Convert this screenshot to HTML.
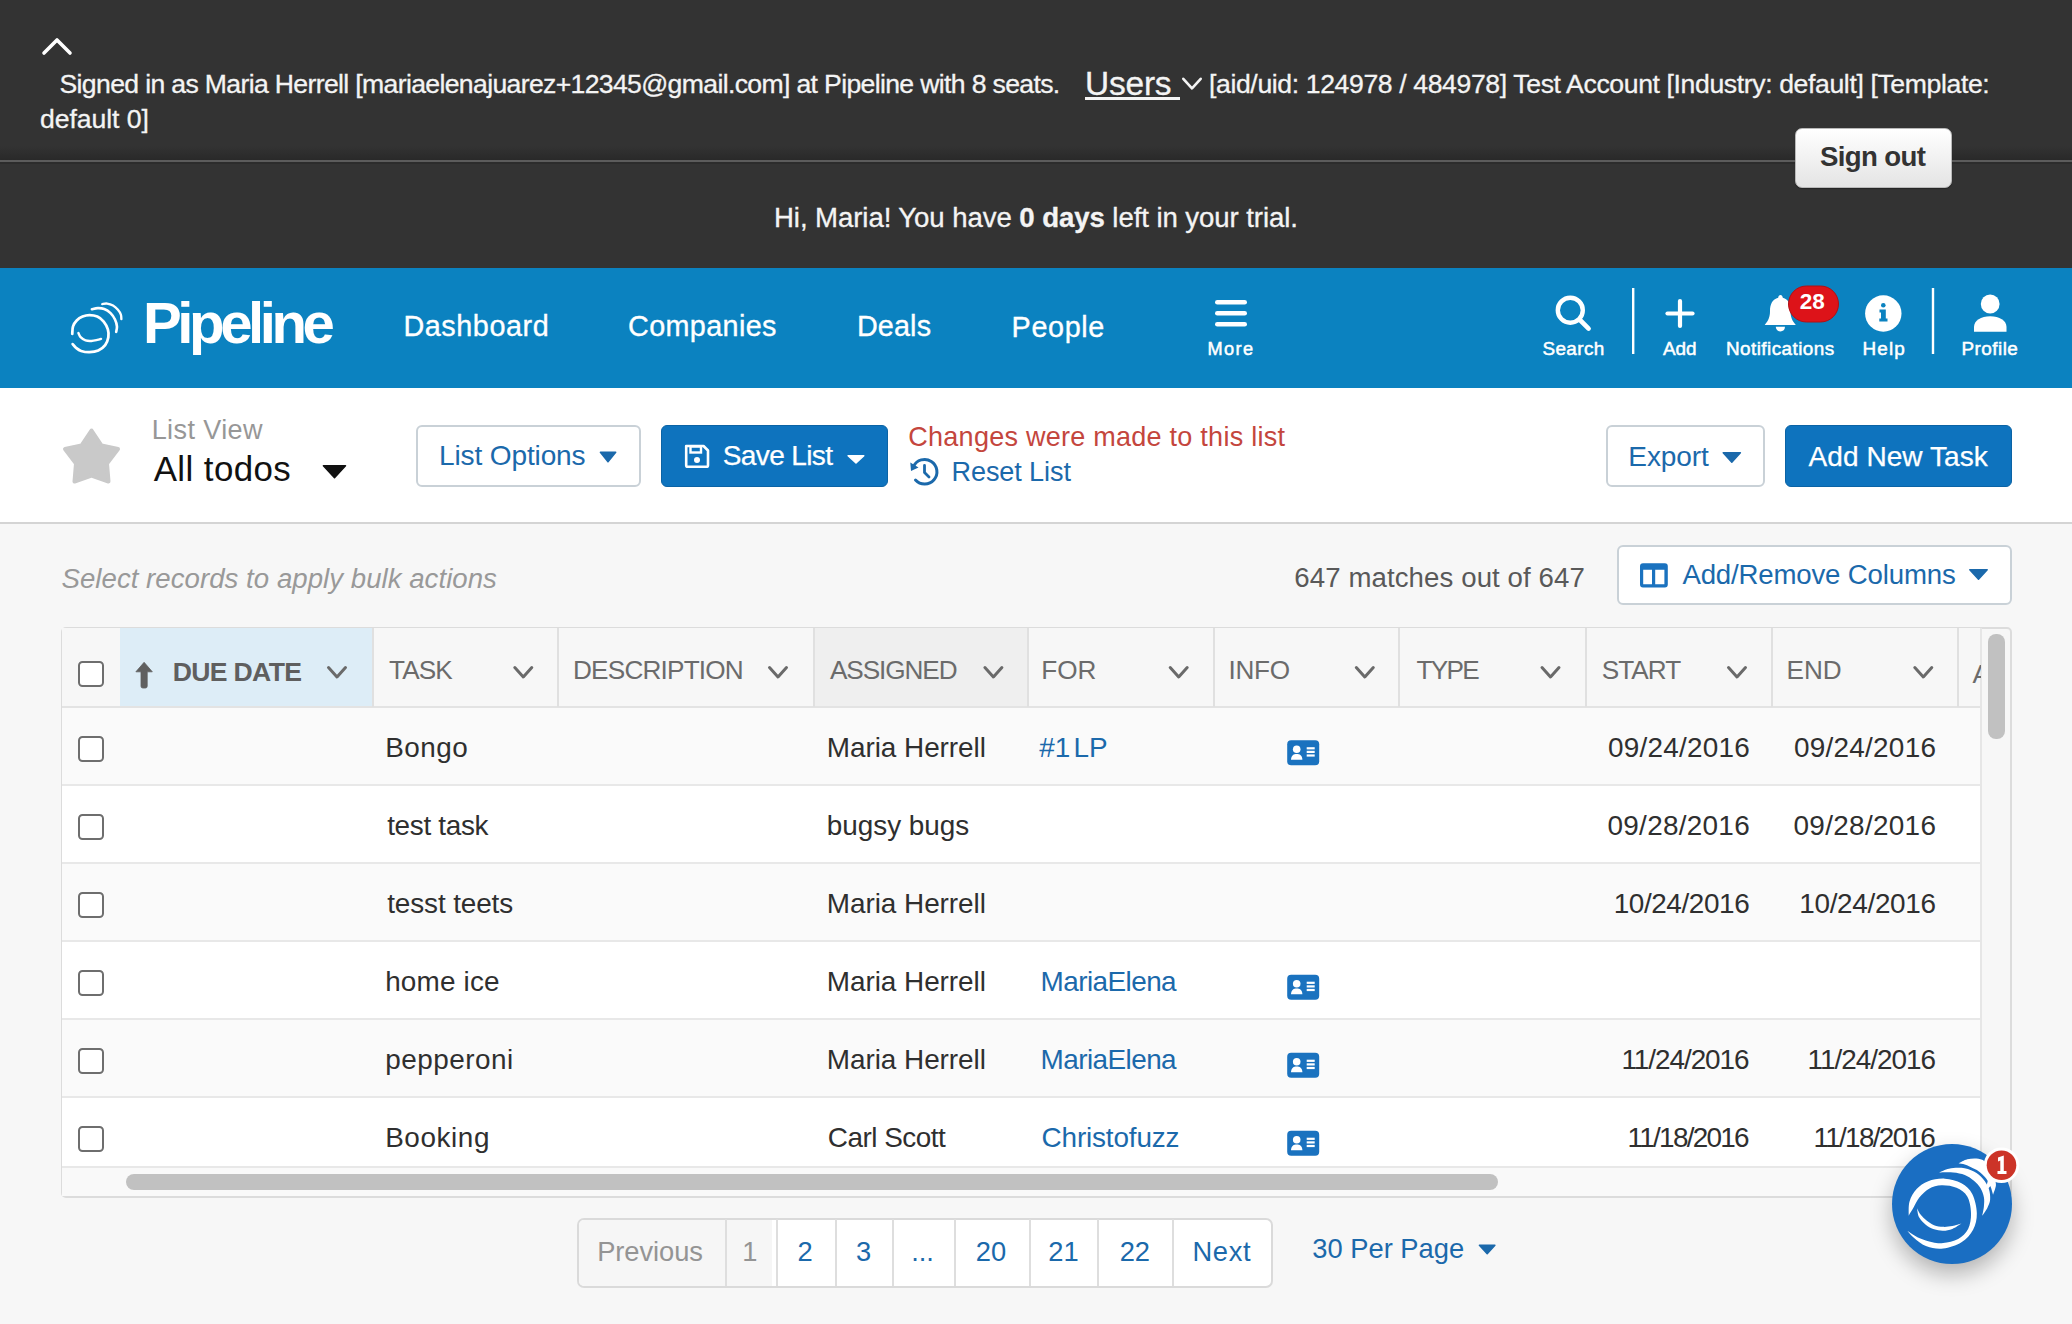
<!DOCTYPE html>
<html><head><meta charset="utf-8"><style>
*{box-sizing:border-box}
html,body{margin:0;padding:0}
body{width:2072px;height:1324px;overflow:hidden;position:relative;background:#f7f7f7;font-family:"Liberation Sans",sans-serif}
.t{position:absolute;white-space:nowrap;font-family:"Liberation Sans",sans-serif}
.abs{position:absolute}
.cb{position:absolute;left:78px;width:26px;height:26px;border:2.2px solid #6e6e6e;border-radius:4.5px;background:#fff}
.row{position:absolute;left:62px;width:1919px;height:78px;border-bottom:2px solid #e8e8e8}
.sep{position:absolute;top:628px;width:2px;height:79px;background:#e0e0e0}
.pd{position:absolute;top:1219px;width:2px;height:67px;background:#dedede}
</style></head><body>
<div class="abs" style="left:0;top:0;width:2072px;height:268px;background:#333333"></div>
<div class="abs" style="left:0;top:146px;width:2072px;height:14px;background:linear-gradient(#333333,#292929)"></div>
<div class="abs" style="left:0;top:160px;width:2072px;height:2px;background:#5c5c5c"></div>
<div class="abs" style="left:0;top:162px;width:2072px;height:1.5px;background:#2c2c2c"></div>
<div class="abs" style="left:1795px;top:128px;width:157px;height:60px;border-radius:7px;background:linear-gradient(#ffffff,#e4e4e4);border:1.5px solid #b9b9b9;box-shadow:0 1px 1px rgba(0,0,0,.3)"></div>
<div class="abs" style="left:0;top:268px;width:2072px;height:120px;background:#0b82c0"></div>
<div class="abs" style="left:0;top:388px;width:2072px;height:134px;background:#ffffff"></div>
<div class="abs" style="left:0;top:521.5px;width:2072px;height:2.5px;background:#d4d4d4"></div>
<div class="abs" style="left:416px;top:425px;width:224.5px;height:61.5px;border:2px solid #c9d1d7;border-radius:6px;background:#fff"></div>
<div class="abs" style="left:661px;top:425px;width:227px;height:61.5px;border-radius:6px;background:#0e73be;border:1px solid #0b63a5"></div>
<div class="abs" style="left:1606px;top:425px;width:158.5px;height:61.5px;border:2px solid #c9d1d7;border-radius:6px;background:#fff"></div>
<div class="abs" style="left:1785px;top:425px;width:227px;height:61.5px;border-radius:6px;background:#0e73be;border:1px solid #0b63a5"></div>
<div class="abs" style="left:1616.5px;top:544.5px;width:395px;height:60.5px;border:2px solid #c9d1d7;border-radius:6px;background:#fff"></div>
<!-- table -->
<div class="abs" style="left:60.5px;top:626.5px;width:1951px;height:571px;border:2px solid #dcdcdc;border-radius:5px;background:#f7f7f7;overflow:hidden">
</div>
<div class="abs" style="left:62px;top:628px;width:1919px;height:80px;background:#f7f7f7;border-bottom:2.5px solid #e3e3e3"></div>
<div class="abs" style="left:120px;top:628px;width:252px;height:77.5px;background:#ddedf7"></div>
<div class="abs" style="left:813.5px;top:628px;width:213.5px;height:77.5px;background:#efefef"></div>
<div class="sep" style="left:371.5px"></div><div class="sep" style="left:557.0px"></div><div class="sep" style="left:812.5px"></div><div class="sep" style="left:1026.5px"></div><div class="sep" style="left:1212.5px"></div><div class="sep" style="left:1398.0px"></div><div class="sep" style="left:1584.5px"></div><div class="sep" style="left:1770.5px"></div><div class="sep" style="left:1956.5px"></div>
<div class="row" style="top:708px;background:#fafafa"></div><div class="row" style="top:786px;background:#ffffff"></div><div class="row" style="top:864px;background:#fafafa"></div><div class="row" style="top:942px;background:#ffffff"></div><div class="row" style="top:1020px;background:#fafafa"></div><div class="row" style="top:1098px;background:#ffffff"></div>
<div class="abs" style="left:62px;top:1166px;width:1919px;height:29.5px;background:#f9f9f9;border-top:2px solid #e8e8e8"></div>
<div class="abs" style="left:126px;top:1173.5px;width:1372px;height:16.5px;border-radius:8px;background:#c1c1c1"></div>
<div class="abs" style="left:1979.8px;top:628px;width:2px;height:568px;background:#e6e6e6"></div>
<div class="abs" style="left:1988px;top:634.4px;width:16.5px;height:105px;border-radius:8px;background:#c1c1c1"></div>
<div class="cb" style="top:661.0px"></div><div class="cb" style="top:735.8px"></div><div class="cb" style="top:813.8px"></div><div class="cb" style="top:891.8px"></div><div class="cb" style="top:969.8px"></div><div class="cb" style="top:1047.8px"></div><div class="cb" style="top:1125.8px"></div>
<div class="abs" style="left:1958px;top:628px;width:22.5px;height:78px;overflow:hidden"><div class="t" style="left:14.5px;top:33px;font-size:26.16px;line-height:26.16px;color:#6b6b6b">A</div></div>
<!-- pagination -->
<div class="abs" style="left:576.5px;top:1218px;width:696px;height:69.5px;border:2px solid #dadada;border-radius:7px;background:#fff;overflow:hidden">
<div class="abs" style="left:0;top:0;width:193px;height:66px;background:#f6f6f6"></div>
</div>
<div class="pd" style="left:724.5px"></div><div class="pd" style="left:775.7px"></div><div class="pd" style="left:834.5px"></div><div class="pd" style="left:891.8px"></div><div class="pd" style="left:953.8px"></div><div class="pd" style="left:1028.8px"></div><div class="pd" style="left:1096.8px"></div><div class="pd" style="left:1171.8px"></div>
<svg class="abs" style="left:0;top:0" width="2072" height="1324" viewBox="0 0 2072 1324">
<polyline points="44,53 57,40 70,53" fill="none" stroke="#fff" stroke-width="3.6" stroke-linecap="round" stroke-linejoin="round"/>
<rect x="1085" y="97" width="95" height="3" fill="#f4f4f4"/>
<polyline points="1183.3,78.8 1192.0,88.4 1200.7,78.8" fill="none" stroke="#f4f4f4" stroke-width="2.6" stroke-linecap="round" stroke-linejoin="round"/>
<g transform="translate(60,295) scale(0.04909)" fill="none" stroke="#fff" stroke-linecap="round"><path d="M250.0 790.0 C252.5 765.0 250.0 685.0 265.0 640.0 C280.0 595.0 307.5 553.3 340.0 520.0 C372.5 486.7 416.7 458.3 460.0 440.0 C503.3 421.7 550.0 410.0 600.0 410.0 C650.0 410.0 711.7 418.3 760.0 440.0 C808.3 461.7 854.2 496.7 890.0 540.0 C925.8 583.3 959.2 646.7 975.0 700.0 C990.8 753.3 994.2 806.7 985.0 860.0 C975.8 913.3 954.2 975.0 920.0 1020.0 C885.8 1065.0 833.3 1105.8 780.0 1130.0 C726.7 1154.2 658.3 1163.3 600.0 1165.0 C541.7 1166.7 475.0 1154.2 430.0 1140.0 C385.0 1125.8 358.7 1103.3 330.0 1080.0 C301.3 1056.7 270.0 1013.3 258.0 1000.0" stroke-width="56"/><path d="M375.0 775.0 C382.5 789.2 395.8 835.0 420.0 860.0 C444.2 885.0 483.3 912.5 520.0 925.0 C556.7 937.5 600.0 936.7 640.0 935.0 C680.0 933.3 727.5 921.7 760.0 915.0 C792.5 908.3 822.5 898.3 835.0 895.0" stroke-width="50"/><path d="M650.0 290.0 C670.0 286.3 728.3 268.8 770.0 268.0 C811.7 267.2 856.7 268.0 900.0 285.0 C943.3 302.0 993.3 334.2 1030.0 370.0 C1066.7 405.8 1098.3 455.0 1120.0 500.0 C1141.7 545.0 1155.8 598.3 1160.0 640.0 C1164.2 681.7 1147.5 731.7 1145.0 750.0" stroke-width="54"/><path d="M860.0 185.0 C876.7 183.3 923.3 170.0 960.0 175.0 C996.7 180.0 1043.3 194.2 1080.0 215.0 C1116.7 235.8 1153.3 269.2 1180.0 300.0 C1206.7 330.8 1228.3 368.3 1240.0 400.0 C1251.7 431.7 1248.3 475.0 1250.0 490.0" stroke-width="48"/></g>
<rect x="1215" y="300" width="32" height="4.6" rx="2.3" fill="#fff"/>
<rect x="1215" y="311" width="32" height="4.6" rx="2.3" fill="#fff"/>
<rect x="1215" y="322" width="32" height="4.6" rx="2.3" fill="#fff"/>
<circle cx="1570.3" cy="310.2" r="12.5" fill="none" stroke="#fff" stroke-width="4.4"/>
<line x1="1579.5" y1="319.5" x2="1588.6" y2="328.6" stroke="#fff" stroke-width="4.6" stroke-linecap="round"/>
<rect x="1632" y="288" width="2.4" height="66" fill="#fff"/>
<rect x="1931.8" y="288" width="2.4" height="66" fill="#fff"/>
<line x1="1667.5" y1="313.5" x2="1692.5" y2="313.5" stroke="#fff" stroke-width="4.2" stroke-linecap="round"/>
<line x1="1680" y1="301" x2="1680" y2="326" stroke="#fff" stroke-width="4.2" stroke-linecap="round"/>
<path d="M1780.5 295 C1782 295 1782.6 296.5 1782.8 297.8 C1788.5 299.5 1790.5 304 1790.5 311 C1790.5 317 1792 320.5 1795.8 324.9 L1764.7 324.9 C1768.5 320.5 1770 317 1770 311 C1770 304 1772.5 299.5 1778.2 297.8 C1778.4 296.5 1779 295 1780.5 295 Z" fill="#fff"/>
<path d="M1775.8 326.7 L1785 326.7 C1785 329.5 1783 331.4 1780.4 331.4 C1777.8 331.4 1775.8 329.5 1775.8 326.7 Z" fill="#fff"/>
<rect x="1788.5" y="286" width="50" height="36" rx="18" fill="#dd1319" stroke="#b01015" stroke-width="1"/>
<circle cx="1883.3" cy="313.5" r="18.2" fill="#fff"/>
<circle cx="1883.3" cy="305.3" r="2.3" fill="#0b82c0"/>
<path d="M1879.5 309.5 L1885.8 309.5 L1885.8 318.5 L1887.5 318.5 L1887.5 321.6 L1879.3 321.6 L1879.3 318.5 L1881 318.5 L1881 312.6 L1879.5 312.6 Z" fill="#0b82c0"/>
<circle cx="1990.2" cy="304" r="9.4" fill="#fff"/>
<path d="M1974 331.7 L1974 327 C1974 320.5 1981 316.3 1990.2 316.3 C1999.4 316.3 2006.5 320.5 2006.5 327 L2006.5 331.7 Z" fill="#fff"/>
<polygon points="91.5,430.5 101.5,445.5 118,449 107,463.5 108.5,481.5 91.5,475.5 74.5,481.5 76,463.5 65,449 81.5,445.5" fill="#c9c9c9" stroke="#c9c9c9" stroke-width="4" stroke-linejoin="round"/>
<polygon points="323.4,465.8 345.5,465.8 334.5,477.7" fill="#111" stroke="#111" stroke-width="1.5" stroke-linejoin="round"/>
<polygon points="600.4,452.3 615.7,452.3 608.0,461.8" fill="#1b69ab" stroke="#1b69ab" stroke-width="1.5" stroke-linejoin="round"/>
<path d="M686.2 446 L703.5 446 L708 450.5 L708 465.2 Q708 466.8 706.4 466.8 L687.8 466.8 Q686.2 466.8 686.2 465.2 Z" fill="none" stroke="#fff" stroke-width="2.6" stroke-linejoin="round"/>
<rect x="690.5" y="446.5" width="10.5" height="6" fill="none" stroke="#fff" stroke-width="2.4"/>
<circle cx="697" cy="460" r="3" fill="#fff"/>
<polygon points="848.1,455.8 863.8,455.8 856.0,463.0" fill="#fff" stroke="#fff" stroke-width="1.5" stroke-linejoin="round"/>
<path d="M913.5 466.5 A12.3 12.3 0 1 1 915.5 480" fill="none" stroke="#1b69ab" stroke-width="3" stroke-linecap="round"/>
<polygon points="910.3,462.5 918.5,467.5 911,471" fill="#1b69ab"/>
<polyline points="924.5,465.5 924.5,472.5 929,477" fill="none" stroke="#1b69ab" stroke-width="2.8" stroke-linecap="round" stroke-linejoin="round"/>
<polygon points="1723.2,452.8 1740.4,452.8 1731.8,462.2" fill="#1b69ab" stroke="#1b69ab" stroke-width="1.5" stroke-linejoin="round"/>
<path d="M1643 563.3 L1664.8 563.3 Q1667.8 563.3 1667.8 566.3 L1667.8 584.6 Q1667.8 587.6 1664.8 587.6 L1643 587.6 Q1640 587.6 1640 584.6 L1640 566.3 Q1640 563.3 1643 563.3 Z M1643.2 569.8 L1643.2 584.3 L1652 584.3 L1652 569.8 Z M1655.2 569.8 L1655.2 584.3 L1664.4 584.3 L1664.4 569.8 Z" fill="#1a72bf" fill-rule="evenodd"/>
<polygon points="1969.8,569.8 1987.2,569.8 1978.5,579.2" fill="#1b69ab" stroke="#1b69ab" stroke-width="1.5" stroke-linejoin="round"/>
<path d="M144.1 662.3 L152.3 671.8 L147.2 671.8 L147.2 686.2 Q147.2 688 145.4 688 L142.8 688 Q141 688 141 686.2 L141 671.8 L135.9 671.8 Z" fill="#606060" stroke="#606060" stroke-width="0.8" stroke-linejoin="round"/>
<polyline points="328.5,667.5 337.0,677.0 345.5,667.5" fill="none" stroke="#6a6a6a" stroke-width="3" stroke-linecap="round" stroke-linejoin="round"/>
<polyline points="514.8,667.5 523.3,677.0 531.8,667.5" fill="none" stroke="#6a6a6a" stroke-width="3" stroke-linecap="round" stroke-linejoin="round"/>
<polyline points="769.5,667.5 778.0,677.0 786.5,667.5" fill="none" stroke="#6a6a6a" stroke-width="3" stroke-linecap="round" stroke-linejoin="round"/>
<polyline points="984.9,667.5 993.4,677.0 1001.9,667.5" fill="none" stroke="#6a6a6a" stroke-width="3" stroke-linecap="round" stroke-linejoin="round"/>
<polyline points="1170.2,667.5 1178.7,677.0 1187.2,667.5" fill="none" stroke="#6a6a6a" stroke-width="3" stroke-linecap="round" stroke-linejoin="round"/>
<polyline points="1356.3,667.5 1364.8,677.0 1373.3,667.5" fill="none" stroke="#6a6a6a" stroke-width="3" stroke-linecap="round" stroke-linejoin="round"/>
<polyline points="1542.0,667.5 1550.5,677.0 1559.0,667.5" fill="none" stroke="#6a6a6a" stroke-width="3" stroke-linecap="round" stroke-linejoin="round"/>
<polyline points="1728.5,667.5 1737.0,677.0 1745.5,667.5" fill="none" stroke="#6a6a6a" stroke-width="3" stroke-linecap="round" stroke-linejoin="round"/>
<polyline points="1914.8,667.5 1923.3,677.0 1931.8,667.5" fill="none" stroke="#6a6a6a" stroke-width="3" stroke-linecap="round" stroke-linejoin="round"/>
<g transform="translate(1287.2,740.2)"><rect x="0" y="0" width="32" height="25" rx="4" fill="#1a72bf"/><circle cx="9.5" cy="9" r="3.8" fill="#fff"/><path d="M3.8 19.5 C4 15 6.5 13.8 9.5 13.8 C12.5 13.8 15 15 15.2 19.5 Z" fill="#fff"/><rect x="19.5" y="7" width="8" height="2.2" fill="#fff"/><rect x="19.5" y="10.6" width="8" height="2.2" fill="#fff"/><rect x="19.5" y="14.2" width="8" height="2.2" fill="#fff"/></g>
<g transform="translate(1287.2,974.7)"><rect x="0" y="0" width="32" height="25" rx="4" fill="#1a72bf"/><circle cx="9.5" cy="9" r="3.8" fill="#fff"/><path d="M3.8 19.5 C4 15 6.5 13.8 9.5 13.8 C12.5 13.8 15 15 15.2 19.5 Z" fill="#fff"/><rect x="19.5" y="7" width="8" height="2.2" fill="#fff"/><rect x="19.5" y="10.6" width="8" height="2.2" fill="#fff"/><rect x="19.5" y="14.2" width="8" height="2.2" fill="#fff"/></g>
<g transform="translate(1287.2,1052.7)"><rect x="0" y="0" width="32" height="25" rx="4" fill="#1a72bf"/><circle cx="9.5" cy="9" r="3.8" fill="#fff"/><path d="M3.8 19.5 C4 15 6.5 13.8 9.5 13.8 C12.5 13.8 15 15 15.2 19.5 Z" fill="#fff"/><rect x="19.5" y="7" width="8" height="2.2" fill="#fff"/><rect x="19.5" y="10.6" width="8" height="2.2" fill="#fff"/><rect x="19.5" y="14.2" width="8" height="2.2" fill="#fff"/></g>
<g transform="translate(1287.2,1130.7)"><rect x="0" y="0" width="32" height="25" rx="4" fill="#1a72bf"/><circle cx="9.5" cy="9" r="3.8" fill="#fff"/><path d="M3.8 19.5 C4 15 6.5 13.8 9.5 13.8 C12.5 13.8 15 15 15.2 19.5 Z" fill="#fff"/><rect x="19.5" y="7" width="8" height="2.2" fill="#fff"/><rect x="19.5" y="10.6" width="8" height="2.2" fill="#fff"/><rect x="19.5" y="14.2" width="8" height="2.2" fill="#fff"/></g>
<polygon points="1479.4,1245.2 1494.9,1245.2 1487.2,1253.7" fill="#1b69ab" stroke="#1b69ab" stroke-width="1.5" stroke-linejoin="round"/>
</svg>
<div class="t" style="left:59.50px;top:71.00px;font-size:26.60px;line-height:26.60px;font-weight:400;letter-spacing:-0.649px;color:#f4f4f4;-webkit-text-stroke:0.30px #f4f4f4;">Signed in as Maria Herrell [mariaelenajuarez+12345@gmail.com] at Pipeline with 8 seats.</div>
<div class="t" style="left:1085.00px;top:67.30px;font-size:33.43px;line-height:33.43px;font-weight:400;letter-spacing:-0.175px;color:#f4f4f4;-webkit-text-stroke:0.30px #f4f4f4;">Users</div>
<div class="t" style="left:1209.00px;top:71.00px;font-size:26.60px;line-height:26.60px;font-weight:400;letter-spacing:-0.377px;color:#f4f4f4;-webkit-text-stroke:0.30px #f4f4f4;">[aid/uid: 124978 / 484978] Test Account [Industry: default] [Template:</div>
<div class="t" style="left:40.00px;top:106.00px;font-size:26.60px;line-height:26.60px;font-weight:400;letter-spacing:-0.067px;color:#f4f4f4;-webkit-text-stroke:0.30px #f4f4f4;">default 0]</div>
<div class="t" style="left:1820.00px;top:143.00px;font-size:27.62px;line-height:27.62px;font-weight:700;letter-spacing:-0.629px;color:#333;">Sign out</div>
<div class="t" style="left:774.00px;top:204.00px;font-size:27.62px;line-height:27.62px;font-weight:400;letter-spacing:-0.089px;color:#f4f4f4;-webkit-text-stroke:0.30px #f4f4f4;">Hi, Maria! You have <b>0 days</b> left in your trial.</div>
<div class="t" style="left:143.00px;top:294.00px;font-size:58.14px;line-height:58.14px;font-weight:700;letter-spacing:-4.429px;color:#fff;">Pipeline</div>
<div class="t" style="left:403.40px;top:312.00px;font-size:28.78px;line-height:28.78px;font-weight:400;letter-spacing:0.575px;color:#fff;-webkit-text-stroke:0.35px #fff;">Dashboard</div>
<div class="t" style="left:628.00px;top:312.00px;font-size:28.78px;line-height:28.78px;font-weight:400;letter-spacing:0.375px;color:#fff;-webkit-text-stroke:0.35px #fff;">Companies</div>
<div class="t" style="left:856.90px;top:312.00px;font-size:28.78px;line-height:28.78px;font-weight:400;letter-spacing:0.150px;color:#fff;-webkit-text-stroke:0.35px #fff;">Deals</div>
<div class="t" style="left:1011.60px;top:312.50px;font-size:28.78px;line-height:28.78px;font-weight:400;letter-spacing:0.640px;color:#fff;-webkit-text-stroke:0.35px #fff;">People</div>
<div class="t" style="left:1207.50px;top:339.70px;font-size:18.17px;line-height:18.17px;font-weight:400;letter-spacing:1.433px;color:#fff;-webkit-text-stroke:0.50px #fff;">More</div>
<div class="t" style="left:1542.50px;top:339.80px;font-size:18.90px;line-height:18.90px;font-weight:400;letter-spacing:0.380px;color:#fff;-webkit-text-stroke:0.50px #fff;">Search</div>
<div class="t" style="left:1663.00px;top:339.80px;font-size:18.90px;line-height:18.90px;font-weight:400;letter-spacing:0.000px;color:#fff;-webkit-text-stroke:0.50px #fff;">Add</div>
<div class="t" style="left:1726.00px;top:340.00px;font-size:18.90px;line-height:18.90px;font-weight:400;letter-spacing:0.442px;color:#fff;-webkit-text-stroke:0.50px #fff;">Notifications</div>
<div class="t" style="left:1862.60px;top:340.00px;font-size:18.90px;line-height:18.90px;font-weight:400;letter-spacing:1.067px;color:#fff;-webkit-text-stroke:0.50px #fff;">Help</div>
<div class="t" style="left:1961.50px;top:340.00px;font-size:18.90px;line-height:18.90px;font-weight:400;letter-spacing:0.467px;color:#fff;-webkit-text-stroke:0.50px #fff;">Profile</div>
<div class="t" style="left:1799.70px;top:291.30px;font-size:22.53px;line-height:22.53px;font-weight:700;letter-spacing:0.000px;color:#fff;">28</div>
<div class="t" style="left:151.70px;top:417.00px;font-size:27.04px;line-height:27.04px;font-weight:400;letter-spacing:0.388px;color:#979797;">List View</div>
<div class="t" style="left:153.70px;top:452.20px;font-size:34.88px;line-height:34.88px;font-weight:400;letter-spacing:0.413px;color:#111;">All todos</div>
<div class="t" style="left:439.00px;top:442.00px;font-size:28.05px;line-height:28.05px;font-weight:400;letter-spacing:-0.136px;color:#1b69ab;">List Options</div>
<div class="t" style="left:722.80px;top:441.90px;font-size:28.05px;line-height:28.05px;font-weight:400;letter-spacing:-0.650px;color:#fff;-webkit-text-stroke:0.25px #fff;">Save List</div>
<div class="t" style="left:908.30px;top:423.60px;font-size:27.04px;line-height:27.04px;font-weight:400;letter-spacing:0.241px;color:#c4463d;">Changes were made to this list</div>
<div class="t" style="left:951.50px;top:459.00px;font-size:27.04px;line-height:27.04px;font-weight:400;letter-spacing:-0.089px;color:#1b69ab;">Reset List</div>
<div class="t" style="left:1628.30px;top:442.80px;font-size:28.05px;line-height:28.05px;font-weight:400;letter-spacing:-0.120px;color:#1b69ab;">Export</div>
<div class="t" style="left:1808.60px;top:442.80px;font-size:28.05px;line-height:28.05px;font-weight:400;letter-spacing:0.036px;color:#fff;-webkit-text-stroke:0.25px #fff;">Add New Task</div>
<div class="t" style="left:61.50px;top:564.60px;font-size:27.62px;line-height:27.62px;font-weight:400;letter-spacing:0.031px;color:#999;font-style:italic;">Select records to apply bulk actions</div>
<div class="t" style="left:1294.30px;top:564.30px;font-size:27.62px;line-height:27.62px;font-weight:400;letter-spacing:0.095px;color:#595959;">647 matches out of 647</div>
<div class="t" style="left:1682.40px;top:561.20px;font-size:27.62px;line-height:27.62px;font-weight:400;letter-spacing:-0.171px;color:#1b69ab;">Add/Remove Columns</div>
<div class="t" style="left:172.70px;top:658.60px;font-size:26.60px;line-height:26.60px;font-weight:700;letter-spacing:-0.671px;color:#5f5f5f;">DUE DATE</div>
<div class="t" style="left:389.00px;top:657.20px;font-size:26.16px;line-height:26.16px;font-weight:400;letter-spacing:-0.900px;color:#6b6b6b;">TASK</div>
<div class="t" style="left:573.00px;top:657.20px;font-size:26.16px;line-height:26.16px;font-weight:400;letter-spacing:-0.800px;color:#6b6b6b;">DESCRIPTION</div>
<div class="t" style="left:830.00px;top:657.20px;font-size:26.16px;line-height:26.16px;font-weight:400;letter-spacing:-1.086px;color:#6b6b6b;">ASSIGNED</div>
<div class="t" style="left:1041.20px;top:657.20px;font-size:26.16px;line-height:26.16px;font-weight:400;letter-spacing:0.000px;color:#6b6b6b;">FOR</div>
<div class="t" style="left:1228.50px;top:657.20px;font-size:26.16px;line-height:26.16px;font-weight:400;letter-spacing:-0.300px;color:#6b6b6b;">INFO</div>
<div class="t" style="left:1416.60px;top:657.20px;font-size:26.16px;line-height:26.16px;font-weight:400;letter-spacing:-1.733px;color:#6b6b6b;">TYPE</div>
<div class="t" style="left:1601.70px;top:657.20px;font-size:26.16px;line-height:26.16px;font-weight:400;letter-spacing:-0.975px;color:#6b6b6b;">START</div>
<div class="t" style="left:1786.45px;top:657.20px;font-size:26.16px;line-height:26.16px;font-weight:400;letter-spacing:0.000px;color:#6b6b6b;">END</div>
<div class="t" style="left:385.20px;top:734.00px;font-size:27.91px;line-height:27.91px;font-weight:400;letter-spacing:0.450px;color:#2f2f2f;">Bongo</div>
<div class="t" style="left:826.80px;top:734.00px;font-size:27.91px;line-height:27.91px;font-weight:400;letter-spacing:-0.050px;color:#2f2f2f;">Maria Herrell</div>
<div class="t" style="left:1608.00px;top:734.00px;font-size:27.91px;line-height:27.91px;font-weight:400;letter-spacing:0.222px;color:#2f2f2f;">09/24/2016</div>
<div class="t" style="left:1793.90px;top:734.00px;font-size:27.91px;line-height:27.91px;font-weight:400;letter-spacing:0.267px;color:#2f2f2f;">09/24/2016</div>
<div class="t" style="left:387.20px;top:812.00px;font-size:27.91px;line-height:27.91px;font-weight:400;letter-spacing:-0.325px;color:#2f2f2f;">test task</div>
<div class="t" style="left:826.80px;top:812.00px;font-size:27.91px;line-height:27.91px;font-weight:400;letter-spacing:-0.044px;color:#2f2f2f;">bugsy bugs</div>
<div class="t" style="left:1607.50px;top:812.00px;font-size:27.91px;line-height:27.91px;font-weight:400;letter-spacing:0.278px;color:#2f2f2f;">09/28/2016</div>
<div class="t" style="left:1793.50px;top:812.00px;font-size:27.91px;line-height:27.91px;font-weight:400;letter-spacing:0.311px;color:#2f2f2f;">09/28/2016</div>
<div class="t" style="left:387.20px;top:890.00px;font-size:27.91px;line-height:27.91px;font-weight:400;letter-spacing:-0.120px;color:#2f2f2f;">tesst teets</div>
<div class="t" style="left:826.80px;top:890.00px;font-size:27.91px;line-height:27.91px;font-weight:400;letter-spacing:-0.050px;color:#2f2f2f;">Maria Herrell</div>
<div class="t" style="left:1613.70px;top:890.00px;font-size:27.91px;line-height:27.91px;font-weight:400;letter-spacing:-0.411px;color:#2f2f2f;">10/24/2016</div>
<div class="t" style="left:1799.30px;top:890.00px;font-size:27.91px;line-height:27.91px;font-weight:400;letter-spacing:-0.333px;color:#2f2f2f;">10/24/2016</div>
<div class="t" style="left:385.20px;top:968.00px;font-size:27.91px;line-height:27.91px;font-weight:400;letter-spacing:0.157px;color:#2f2f2f;">home ice</div>
<div class="t" style="left:826.80px;top:968.00px;font-size:27.91px;line-height:27.91px;font-weight:400;letter-spacing:-0.050px;color:#2f2f2f;">Maria Herrell</div>
<div class="t" style="left:1040.60px;top:968.00px;font-size:27.91px;line-height:27.91px;font-weight:400;letter-spacing:-0.567px;color:#1b69ab;">MariaElena</div>
<div class="t" style="left:385.20px;top:1046.00px;font-size:27.91px;line-height:27.91px;font-weight:400;letter-spacing:0.475px;color:#2f2f2f;">pepperoni</div>
<div class="t" style="left:826.80px;top:1046.00px;font-size:27.91px;line-height:27.91px;font-weight:400;letter-spacing:-0.050px;color:#2f2f2f;">Maria Herrell</div>
<div class="t" style="left:1040.60px;top:1046.00px;font-size:27.91px;line-height:27.91px;font-weight:400;letter-spacing:-0.567px;color:#1b69ab;">MariaElena</div>
<div class="t" style="left:1621.40px;top:1046.00px;font-size:27.91px;line-height:27.91px;font-weight:400;letter-spacing:-1.044px;color:#2f2f2f;">11/24/2016</div>
<div class="t" style="left:1807.50px;top:1046.00px;font-size:27.91px;line-height:27.91px;font-weight:400;letter-spacing:-1.022px;color:#2f2f2f;">11/24/2016</div>
<div class="t" style="left:385.20px;top:1124.00px;font-size:27.91px;line-height:27.91px;font-weight:400;letter-spacing:0.567px;color:#2f2f2f;">Booking</div>
<div class="t" style="left:827.80px;top:1124.00px;font-size:27.91px;line-height:27.91px;font-weight:400;letter-spacing:-0.511px;color:#2f2f2f;">Carl Scott</div>
<div class="t" style="left:1041.60px;top:1124.00px;font-size:27.91px;line-height:27.91px;font-weight:400;letter-spacing:-0.170px;color:#1b69ab;">Christofuzz</div>
<div class="t" style="left:1627.60px;top:1124.00px;font-size:27.91px;line-height:27.91px;font-weight:400;letter-spacing:-1.733px;color:#2f2f2f;">11/18/2016</div>
<div class="t" style="left:1813.40px;top:1124.00px;font-size:27.91px;line-height:27.91px;font-weight:400;letter-spacing:-1.678px;color:#2f2f2f;">11/18/2016</div>
<div class="t" style="left:597.20px;top:1237.80px;font-size:27.33px;line-height:27.33px;font-weight:400;letter-spacing:-0.071px;color:#949494;">Previous</div>
<div class="t" style="left:742.20px;top:1237.80px;font-size:27.33px;line-height:27.33px;font-weight:400;letter-spacing:0.000px;color:#949494;">1</div>
<div class="t" style="left:797.60px;top:1237.80px;font-size:27.33px;line-height:27.33px;font-weight:400;letter-spacing:0.000px;color:#1b69ab;">2</div>
<div class="t" style="left:855.90px;top:1237.80px;font-size:27.33px;line-height:27.33px;font-weight:400;letter-spacing:0.000px;color:#1b69ab;">3</div>
<div class="t" style="left:911.20px;top:1237.80px;font-size:27.33px;line-height:27.33px;font-weight:400;letter-spacing:0.000px;color:#1b69ab;">...</div>
<div class="t" style="left:975.80px;top:1237.80px;font-size:27.33px;line-height:27.33px;font-weight:400;letter-spacing:0.000px;color:#1b69ab;">20</div>
<div class="t" style="left:1048.25px;top:1237.80px;font-size:27.33px;line-height:27.33px;font-weight:400;letter-spacing:0.000px;color:#1b69ab;">21</div>
<div class="t" style="left:1119.65px;top:1237.80px;font-size:27.33px;line-height:27.33px;font-weight:400;letter-spacing:0.000px;color:#1b69ab;">22</div>
<div class="t" style="left:1192.50px;top:1237.90px;font-size:27.33px;line-height:27.33px;font-weight:400;letter-spacing:0.600px;color:#1b69ab;">Next</div>
<div class="t" style="left:1312.30px;top:1235.10px;font-size:27.33px;line-height:27.33px;font-weight:400;letter-spacing:-0.010px;color:#1b69ab;">30 Per Page</div>
<div class="t" style="left:1039.20px;top:734.00px;font-size:27.91px;line-height:27.91px;font-weight:400;letter-spacing:0.000px;color:#1b69ab;">#1</div>
<div class="t" style="left:1073.45px;top:734.00px;font-size:27.91px;line-height:27.91px;font-weight:400;letter-spacing:0.000px;color:#1b69ab;">LP</div>
<!-- chat bubble -->
<div class="abs" style="left:1892px;top:1144px;width:120px;height:120px;border-radius:50%;background:#1a6ec2;box-shadow:0 10px 22px rgba(0,0,0,.28)"></div>
<svg class="abs" style="left:0;top:0" width="2072" height="1324" viewBox="0 0 2072 1324">
<g transform="translate(1895,1150) scale(0.08308)" fill="#fff"><path d="M165.0 790.0 C166.7 761.7 159.2 673.3 175.0 620.0 C190.8 566.7 222.5 510.8 260.0 470.0 C297.5 429.2 343.3 395.8 400.0 375.0 C456.7 354.2 533.3 340.8 600.0 345.0 C666.7 349.2 745.0 369.2 800.0 400.0 C855.0 430.8 899.2 470.0 930.0 530.0 C960.8 590.0 983.3 688.3 985.0 760.0 C986.7 831.7 970.8 901.7 940.0 960.0 C909.2 1018.3 860.0 1072.5 800.0 1110.0 C740.0 1147.5 650.0 1176.7 580.0 1185.0 C510.0 1193.3 438.3 1180.8 380.0 1160.0 C321.7 1139.2 268.3 1090.8 230.0 1060.0 C191.7 1029.2 163.3 989.2 150.0 975.0 L150.0 975.0 C173.3 989.2 240.0 1037.5 290.0 1060.0 C340.0 1082.5 401.7 1100.0 450.0 1110.0 C498.3 1120.0 528.3 1126.7 580.0 1120.0 C631.7 1113.3 710.0 1098.3 760.0 1070.0 C810.0 1041.7 854.2 1001.7 880.0 950.0 C905.8 898.3 916.7 825.0 915.0 760.0 C913.3 695.0 899.2 610.8 870.0 560.0 C840.8 509.2 791.7 477.5 740.0 455.0 C688.3 432.5 615.0 423.3 560.0 425.0 C505.0 426.7 454.2 440.8 410.0 465.0 C365.8 489.2 325.8 532.5 295.0 570.0 C264.2 607.5 246.7 653.3 225.0 690.0 C203.3 726.7 175.0 773.3 165.0 790.0 Z"/><path d="M265.0 700.0 C269.2 718.3 272.5 776.7 290.0 810.0 C307.5 843.3 340.0 875.8 370.0 900.0 C400.0 924.2 435.0 943.0 470.0 955.0 C505.0 967.0 543.3 972.8 580.0 972.0 C616.7 971.2 653.3 964.5 690.0 950.0 C726.7 935.5 781.7 895.8 800.0 885.0 L800.0 885.0 C781.7 890.0 726.7 908.3 690.0 915.0 C653.3 921.7 616.7 926.7 580.0 925.0 C543.3 923.3 503.3 917.5 470.0 905.0 C436.7 892.5 406.7 870.8 380.0 850.0 C353.3 829.2 329.2 805.0 310.0 780.0 C290.8 755.0 272.5 713.3 265.0 700.0 Z"/><path d="M530.0 270.0 C550.0 262.5 605.0 234.2 650.0 225.0 C695.0 215.8 750.0 209.2 800.0 215.0 C850.0 220.8 906.7 237.5 950.0 260.0 C993.3 282.5 1030.0 315.0 1060.0 350.0 C1090.0 385.0 1115.8 428.3 1130.0 470.0 C1144.2 511.7 1148.3 561.7 1145.0 600.0 C1141.7 638.3 1125.8 668.3 1110.0 700.0 C1094.2 731.7 1060.0 775.0 1050.0 790.0 L1050.0 790.0 C1053.3 771.7 1066.7 716.7 1070.0 680.0 C1073.3 643.3 1076.7 606.7 1070.0 570.0 C1063.3 533.3 1050.0 493.3 1030.0 460.0 C1010.0 426.7 981.7 396.7 950.0 370.0 C918.3 343.3 881.7 316.7 840.0 300.0 C798.3 283.3 751.7 275.0 700.0 270.0 C648.3 265.0 558.3 270.0 530.0 270.0 Z"/><path d="M765.0 160.0 C782.5 152.0 834.2 121.7 870.0 112.0 C905.8 102.3 946.7 99.0 980.0 102.0 C1013.3 105.0 1045.0 112.0 1070.0 130.0 C1095.0 148.0 1110.0 176.7 1130.0 210.0 C1150.0 243.3 1175.8 295.0 1190.0 330.0 C1204.2 365.0 1216.7 385.0 1215.0 420.0 C1213.3 455.0 1185.8 520.0 1180.0 540.0 L1180.0 540.0 C1175.0 523.3 1164.2 473.3 1150.0 440.0 C1135.8 406.7 1118.3 370.3 1095.0 340.0 C1071.7 309.7 1040.8 280.5 1010.0 258.0 C979.2 235.5 938.3 218.8 910.0 205.0 C881.7 191.2 864.2 182.5 840.0 175.0 C815.8 167.5 777.5 162.5 765.0 160.0 Z"/></g>
<circle cx="2001.5" cy="1165.2" r="17.8" fill="#fff"/>
<path d="M1989 1176 L1985 1192 L1996 1180 Z" fill="#fff"/>
<circle cx="2001.5" cy="1165.2" r="14.8" fill="#cc3428"/>
<path d="M1998 1157.5 L2003.8 1155.5 L2003.8 1171 L2006.5 1171 L2006.5 1174 L1997.5 1174 L1997.5 1171 L2000.3 1171 L2000.3 1160.5 L1998 1161.5 Z" fill="#fff"/>
</svg>
</body></html>
